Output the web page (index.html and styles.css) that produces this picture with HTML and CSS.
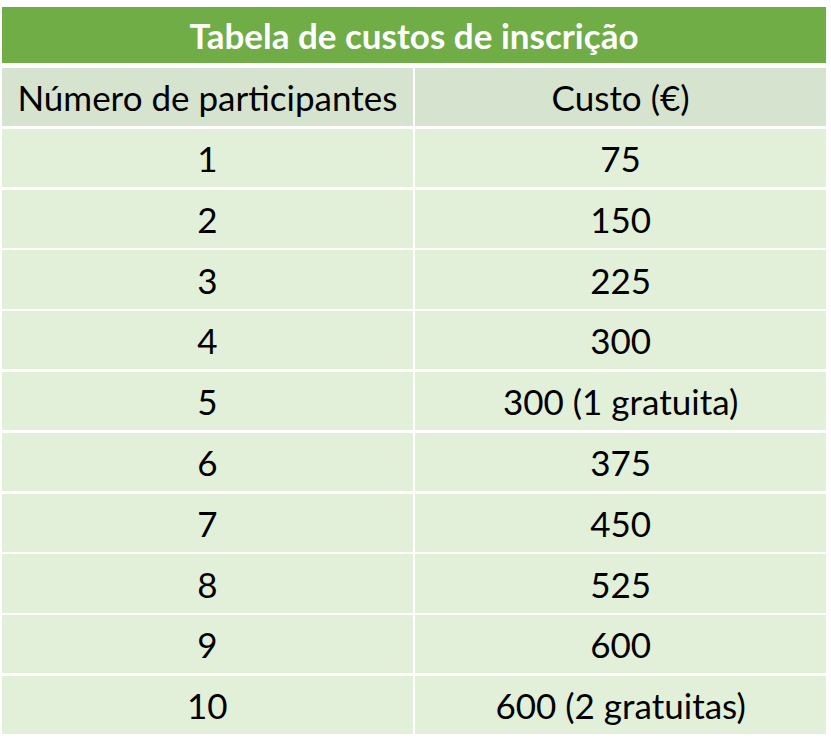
FILE: index.html
```html
<!DOCTYPE html>
<html lang="pt">
<head>
<meta charset="utf-8">
<title>Tabela de custos de inscrição</title>
<link rel="stylesheet" href="styles.css">
</head>
<body>
<div class="page">
  <div class="table">
    <div class="title">Tabela de custos de inscrição</div>
    <div class="grid">
      <div class="cell head">Número de participantes</div>
      <div class="cell head">Custo (€)</div>
      <div class="cell">1</div><div class="cell">75</div>
      <div class="cell">2</div><div class="cell">150</div>
      <div class="cell">3</div><div class="cell">225</div>
      <div class="cell">4</div><div class="cell">300</div>
      <div class="cell">5</div><div class="cell">300 (1 gratuita)</div>
      <div class="cell">6</div><div class="cell">375</div>
      <div class="cell">7</div><div class="cell">450</div>
      <div class="cell">8</div><div class="cell">525</div>
      <div class="cell">9</div><div class="cell">600</div>
      <div class="cell">10</div><div class="cell">600 (2 gratuitas)</div>
    </div>
  </div>
</div>
</body>
</html>
```
FILE: styles.css
```css
html, body {
  margin: 0;
  padding: 0;
  background: #ffffff;
}
.page {
  padding: 7px 5px 0 2px;
  width: 824px;
}
.table {
  display: flex;
  flex-direction: column;
  gap: 5px;
  font-family: Lato, "Open Sans", sans-serif;
  color: #000000;
}
.title {
  height: 56px;
  background: #70ad47;
  color: #ffffff;
  font-weight: 700;
  font-size: 35px;
  display: flex;
  align-items: center;
  justify-content: center;
}
.grid {
  display: grid;
  grid-template-columns: 1fr 1fr;
  grid-auto-rows: 58.3px;
  gap: 2.5px;
}
.cell {
  background: #e2efd9;
  display: flex;
  align-items: center;
  justify-content: center;
  font-size: 35px;
}
.cell.head {
  background: #d6e3cf;
}
```
